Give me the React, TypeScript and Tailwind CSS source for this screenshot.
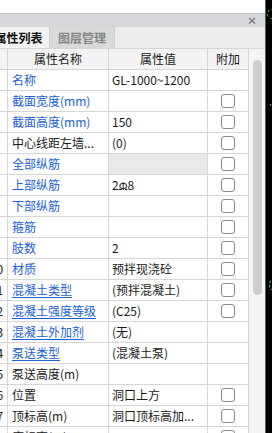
import React from "react";

type Row = {
  n: number;
  label: string;
  value?: React.ReactNode;
  blue?: boolean;
  link?: boolean;
  check?: boolean;
  gray?: boolean;
};

const ROWS: Row[] = [
  { n: 1, label: "名称", value: "GL-1000~1200", blue: true },
  { n: 2, label: "截面宽度(mm)", blue: true, check: true },
  { n: 3, label: "截面高度(mm)", value: "150", blue: true, check: true },
  { n: 4, label: "中心线距左墙...", value: "(0)", check: true },
  { n: 5, label: "全部纵筋", blue: true, check: true, gray: true },
  {
    n: 6,
    label: "上部纵筋",
    value: (
      <>
        2<span className="underline decoration-1 underline-offset-[-1px] text-[11px]">Φ</span>8
      </>
    ),
    blue: true,
    check: true,
  },
  { n: 7, label: "下部纵筋", blue: true, check: true },
  { n: 8, label: "箍筋", blue: true, check: true },
  { n: 9, label: "肢数", value: "2", blue: true, check: true },
  { n: 10, label: "材质", value: "预拌现浇砼", blue: true, check: true },
  { n: 11, label: "混凝土类型", value: "(预拌混凝土)", blue: true, link: true, check: true },
  { n: 12, label: "混凝土强度等级", value: "(C25)", blue: true, link: true, check: true },
  { n: 13, label: "混凝土外加剂", value: "(无)", blue: true, link: true },
  { n: 14, label: "泵送类型", value: "(混凝土泵)", blue: true, link: true },
  { n: 15, label: "泵送高度(m)" },
  { n: 16, label: "位置", value: "洞口上方", check: true },
  { n: 17, label: "顶标高(m)", value: "洞口顶标高加...", check: true },
  { n: 18, label: "底标高(m)", check: true },
];

function Check() {
  return <div className="w-[14px] h-[14px] rounded-[3px] border border-[#8a8a8a] bg-white" />;
}

function PropRow({ row }: { row: Row }) {
  return (
    <div className="flex h-[21px] shrink-0 border-b border-[#d6d6d6] bg-white leading-[20px]">
      <div className="w-[22px] shrink-0 border-r border-[#d6d6d6] text-center text-[#222]">
        {row.n}
      </div>
      <div
        className={`w-[101px] shrink-0 border-r border-[#d6d6d6] pl-1 whitespace-nowrap overflow-hidden ${
          row.blue ? "text-[#2160d4]" : "text-[#1a1a1a]"
        }`}
      >
        <span className={row.link ? "underline underline-offset-2 decoration-1" : ""}>
          {row.label}
        </span>
      </div>
      <div
        className={`w-[99px] shrink-0 border-r border-[#d6d6d6] pl-[3px] whitespace-nowrap overflow-hidden text-[#1a1a1a] ${
          row.gray ? "bg-[#e9e9e9]" : ""
        }`}
      >
        {row.value}
      </div>
      <div className="w-[41px] shrink-0 border-r border-[#d6d6d6] flex items-center justify-center">
        {row.check && <Check />}
      </div>
    </div>
  );
}

export default function App() {
  return (
    <div
      className="flex w-[272px] h-[433px] overflow-hidden bg-black text-[12px]"
      style={{ fontFamily: '"Noto Sans CJK SC", "Noto Sans", sans-serif' }}
    >
      <div className="flex flex-col w-[266px] shrink-0 border-r border-[#5c5c5c] bg-white">
        <div className="h-[14px] shrink-0 border-b border-[#c4c4c4] bg-white" />
        <div className="h-[13px] shrink-0 bg-[#d5d7db] flex items-center justify-end pr-[8px]">
          <span className="text-[10px] leading-none font-bold text-[#707070]">×</span>
        </div>
        <div className="h-[21px] shrink-0 flex bg-[#ececec] overflow-hidden">
          <div className="ml-[-12px] w-[62px] shrink-0 bg-[#f3f3f3] border-r border-[#cfcfcf] flex items-center justify-center font-bold text-[#111]">
            属性列表
          </div>
          <div className="w-[65px] shrink-0 bg-[#d9d9d9] border-r border-[#cfcfcf] flex items-center justify-center font-bold text-[#858585]">
            图层管理
          </div>
        </div>
        <div className="flex flex-1 min-h-0">
          <div className="w-[249px] shrink-0 overflow-hidden flex flex-col">
            <div className="ml-[-14px] flex flex-col">
              <div className="flex h-[22px] shrink-0 border-y border-[#d6d6d6] bg-[#f3f3f3] leading-[20px] text-[#1a1a1a]">
                <div className="w-[22px] shrink-0 border-r border-[#d6d6d6]" />
                <div className="w-[101px] shrink-0 border-r border-[#d6d6d6] text-center">属性名称</div>
                <div className="w-[99px] shrink-0 border-r border-[#d6d6d6] text-center">属性值</div>
                <div className="w-[41px] shrink-0 border-r border-[#d6d6d6] text-center">附加</div>
              </div>
              {ROWS.map((r) => (
                <PropRow key={r.n} row={r} />
              ))}
            </div>
          </div>
          <div className="w-[16px] shrink-0 border-t border-[#d6d6d6] bg-[#f5f5f5] flex justify-center pt-[11px]">
            <div className="w-[9px] h-[235px] rounded-full bg-[#cdcdcd]" />
          </div>
        </div>
      </div>
      <div className="relative flex-1 bg-black">
        <div className="absolute left-[1px] top-[9px] w-[10px] h-[10px] rounded-full border border-dashed border-[#2fbf3a]" />
        <div className="absolute left-[4px] top-[104px] w-[1px] h-[2px] bg-[#2fbf3a]" />
        <div className="absolute left-[3px] top-[280px] w-[8px] h-[10px] rounded-full border border-dashed border-[#2fbf3a]" />
      </div>
    </div>
  );
}
